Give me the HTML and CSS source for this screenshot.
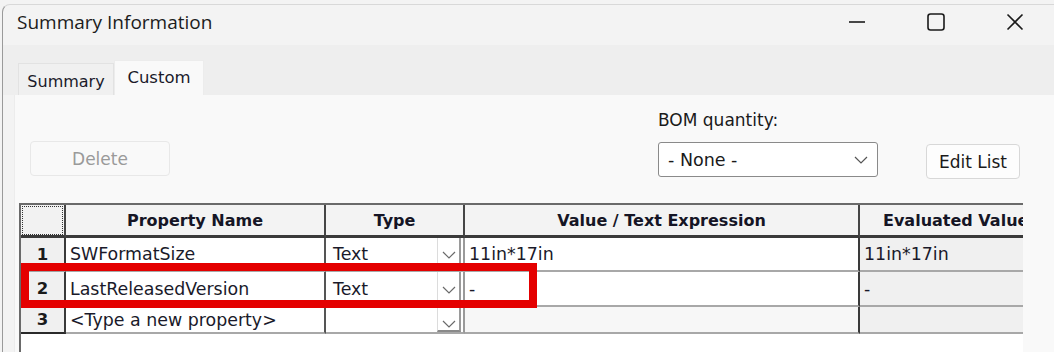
FILE: index.html
```html
<!DOCTYPE html>
<html>
<head>
<meta charset="utf-8">
<link rel="stylesheet" href="styles.css">
</head>
<body>
<div class="window">
  <div class="titlebar">
    <div class="title">Summary Information</div>
    <div class="controls">
      <svg class="ctl" width="20" height="20" viewBox="0 0 20 20"><line x1="2" y1="10" x2="18" y2="10" stroke="#1a1a1a" stroke-width="1.6"/></svg>
      <svg class="ctl" width="20" height="20" viewBox="0 0 20 20"><rect x="2" y="2" width="16" height="16" rx="2.5" fill="none" stroke="#1a1a1a" stroke-width="1.6"/></svg>
      <svg class="ctl" width="20" height="20" viewBox="0 0 20 20"><path d="M2.5 2.5 L17.5 17.5 M17.5 2.5 L2.5 17.5" stroke="#1a1a1a" stroke-width="1.6" fill="none"/></svg>
    </div>
  </div>
  <div class="tabstrip">
    <div class="tab">Summary</div>
    <div class="tab active">Custom</div>
  </div>
  <div class="panel">
    <div class="toolbar">
      <div class="btn disabled delete">Delete</div>
      <div class="bom">
        <div class="bom-label">BOM quantity:</div>
        <div class="combo">
          <span>- None -</span>
          <svg width="14" height="8" viewBox="0 0 14 8"><polyline points="1,1 7,7 13,1" fill="none" stroke="#555" stroke-width="1.2"/></svg>
        </div>
      </div>
      <div class="btn editlist">Edit List</div>
    </div>
    <div class="grid-wrap">
      <div class="grid">
        <div class="hc corner"><div class="focus"></div></div>
        <div class="hc">Property Name</div>
        <div class="hc">Type</div>
        <div class="hc">Value / Text Expression</div>
        <div class="hc eval-h">Evaluated Value</div>

        <div class="rh">1</div>
        <div class="c prop">SWFormatSize</div>
        <div class="c type"><span>Text</span><div class="ddb"><svg width="14" height="8" viewBox="0 0 14 8"><polyline points="1,1 7,7 13,1" fill="none" stroke="#6a6a6a" stroke-width="1.2"/></svg></div></div>
        <div class="c val">11in*17in</div>
        <div class="c ev">11in*17in</div>

        <div class="rh">2</div>
        <div class="c prop">LastReleasedVersion</div>
        <div class="c type"><span>Text</span><div class="ddb"><svg width="14" height="8" viewBox="0 0 14 8"><polyline points="1,1 7,7 13,1" fill="none" stroke="#6a6a6a" stroke-width="1.2"/></svg></div></div>
        <div class="c val">-</div>
        <div class="c ev">-</div>

        <div class="rh last">3</div>
        <div class="c prop">&lt;Type a new property&gt;</div>
        <div class="c type"><span></span><div class="ddb new"><svg width="14" height="8" viewBox="0 0 14 8"><polyline points="1,1 7,7 13,1" fill="none" stroke="#6a6a6a" stroke-width="1.2"/></svg></div></div>
        <div class="c val newval"></div>
        <div class="c ev"></div>
      </div>
      <div class="highlight"></div>
    </div>
  </div>
</div>
</body>
</html>
```
FILE: styles.css
```css
* { box-sizing: border-box; }
html, body { margin: 0; padding: 0; }
body {
  width: 1054px;
  height: 352px;
  overflow: hidden;
  background: #f3f3f3;
  font-family: "DejaVu Sans", "Noto Sans", sans-serif;
  color: #1a1a1a;
}
.window {
  margin-left: 2px;
  margin-top: 4px;
  height: 348px;
  border-left: 1px solid #9a9a9a;
  border-top: 1px solid #d8d8d8;
  border-top-left-radius: 8px;
  background: #f3f3f3;
  display: flex;
  flex-direction: column;
}
.titlebar {
  height: 40px;
  display: flex;
  align-items: center;
  justify-content: space-between;
  flex-shrink: 0;
}
.title {
  font-family: "Open Sans", "Noto Sans", sans-serif;
  font-size: 19px;
  padding-left: 14px;
  padding-bottom: 6px;
  color: #1c1c1c;
}
.controls {
  display: flex;
  gap: 59px;
  padding-right: 29px;
  padding-bottom: 6px;
}
.tabstrip {
  height: 50px;
  background: #eeeeee;
  display: flex;
  align-items: flex-end;
  padding-left: 15px;
  flex-shrink: 0;
}
.tab {
  height: 32px;
  width: 96px;
  font-size: 16px;
  display: flex;
  align-items: center;
  justify-content: center;
  padding-top: 4px;
  background: #f0f0f0;
  border: 1px solid #e2e2e2;
  border-bottom: none;
  color: #1a1a2a;
}
.tab.active {
  height: 35px;
  width: 90px;
  font-size: 16.5px;
  background: #f9f9f9;
  padding-top: 0;
  padding-bottom: 2px;
  border-color: #ececec;
}
.panel {
  flex: 1;
  margin-left: 11px;
  background: #f9f9f9;
  display: flex;
  flex-direction: column;
  border-left: 1px solid #ececec;
}
.toolbar {
  height: 108px;
  display: flex;
  align-items: flex-end;
  padding-bottom: 26px;
  padding-left: 15px;
}
.btn {
  height: 35px;
  border: 1px solid #d8d8d8;
  border-radius: 4px;
  background: #fdfdfd;
  display: flex;
  align-items: center;
  justify-content: center;
  font-size: 17px;
}
.btn.disabled {
  color: #9a9a9a;
  border-color: #e8e8e8;
  background: #f9f9f9;
}
.delete { width: 140px; margin-bottom: 1px; }
.bom {
  margin-left: 488px;
  display: flex;
  flex-direction: column;
}
.bom-label {
  font-size: 17px;
  line-height: 20px;
  margin-bottom: 12px;
}
.combo {
  width: 220px;
  height: 35px;
  border: 1px solid #8a8a8a;
  border-radius: 3px;
  background: #fff;
  display: flex;
  align-items: center;
  justify-content: space-between;
  padding: 0 9px 0 9px;
  font-size: 17.5px;
}
.editlist { width: 94px; margin-left: 48px; margin-bottom: -2px; }
.grid-wrap {
  flex: 1;
  margin-left: 4px;
  width: 1004px;
  background: #fff;
  border-left: 2px solid #6a6a6a;
  border-top: 2px solid #6a6a6a;
  position: relative;
}
.grid {
  display: grid;
  grid-template-columns: 45px 260px 139px 395px 163px;
  grid-template-rows: 33px 34px 35px 27px;
}
.hc {
  background: #f3f3f3;
  border-right: 2px solid #454545;
  border-bottom: 3px solid #3a3a3a;
  font-weight: 700;
  font-size: 16px;
  color: #151525;
  display: flex;
  align-items: center;
  justify-content: center;
  white-space: nowrap;
  overflow: hidden;
}
.hc.corner { position: relative; background: #f2f2f2; }
.focus {
  position: absolute;
  inset: 1px 1px 0 1px;
  border: 1px dotted #333;
}
.hc.eval-h { justify-content: flex-start; padding-left: 23px; border-right: none; }
.rh {
  background: #f0f0f0;
  border-right: 2px solid #3a3a3a;
  border-bottom: 2px solid #a0a0a0;
  font-weight: 700;
  font-size: 16.5px;
  display: flex;
  align-items: center;
  justify-content: center;
}
.rh.last { border-bottom: 2px solid #2a2a2a; }
.c {
  background: #fff;
  border-right: 2px solid #8c8c8c;
  border-bottom: 2px solid #a8a8a8;
  font-size: 17.4px;
  color: #1a1a2a;
  display: flex;
  align-items: center;
  white-space: nowrap;
  overflow: hidden;
}
.prop { padding-left: 4px; border-right-color: #555; }
.type { padding-left: 7px; justify-content: space-between; padding-right: 2px; border-right-color: #9a9a9a; }
.val { padding-left: 4px; border-right-color: #3a3a3a; }
.ev { padding-left: 4px; background: #f0f0f0; border-right: none; }
.newval { background: #f7f7f7; }
.ddb {
  width: 24px;
  height: 100%;
  display: flex;
  align-items: center;
  justify-content: center;
  border-left: 1px solid #dcdcdc;
  border-right: 2px solid #9a9a9a;
  padding-top: 2px;
}
.ddb.new {
  border-bottom: 2px solid #8a8a8a;
  align-items: flex-end;
  padding-bottom: 2px;
}
.highlight {
  position: absolute;
  left: 0px;
  top: 58px;
  width: 516px;
  height: 45px;
  border: 8px solid #e40000;
}
```
